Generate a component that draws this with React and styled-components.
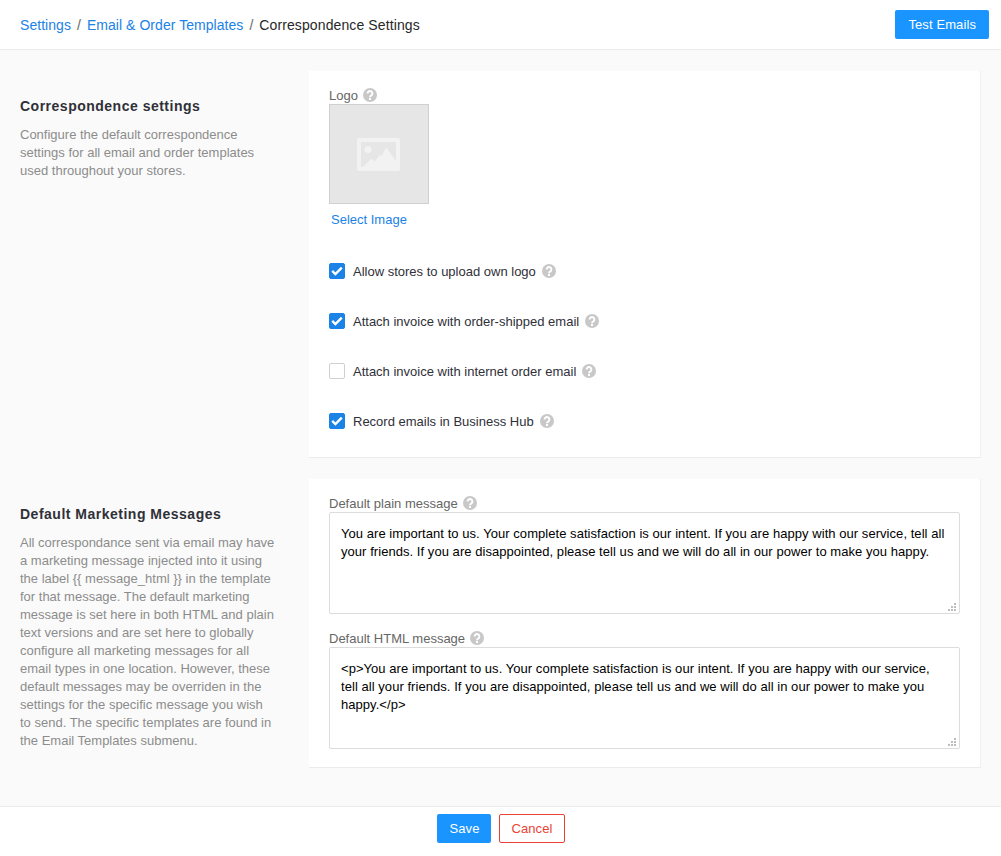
import React from 'react';
import styled, { createGlobalStyle } from 'styled-components';

const GlobalStyle = createGlobalStyle`
  html, body {
    margin: 0;
    padding: 0;
    background: #fff;
  }
  body {
    font-family: "Liberation Sans", Arial, sans-serif;
    font-size: 13px;
  }
`;

const HelpIcon = () => (
  <HelpSvg width="14" height="14" viewBox="0 0 14 14" aria-hidden="true">
    <circle cx="7" cy="7" r="7" fill="#c8c8c8" />
    <path
      d="M4.6 5.4a2.4 2.4 0 1 1 3.8 2c-.9.6-1.4 1-1.4 1.9"
      fill="none"
      stroke="#fff"
      strokeWidth="1.9"
    />
    <rect x="6" y="10" width="2" height="2" fill="#fff" />
  </HelpSvg>
);

const CheckMark = () => (
  <svg width="12" height="10" viewBox="0 0 12 10" aria-hidden="true">
    <path d="M1.2 4.8l3.2 3.2 6.4-6.4" fill="none" stroke="#fff" strokeWidth="2.4" />
  </svg>
);

const ResizeGrip = () => (
  <GripSvg width="8" height="8" viewBox="0 0 8 8" aria-hidden="true">
    <path d="M6 0h2v2H6zM3 3h2v2H3zM6 3h2v2H6zM0 6h2v2H0zM3 6h2v2H3zM6 6h2v2H6z" fill="#bdbdbd" />
  </GripSvg>
);

const options = [
  { label: 'Allow stores to upload own logo', checked: true },
  { label: 'Attach invoice with order-shipped email', checked: true },
  { label: 'Attach invoice with internet order email', checked: false },
  { label: 'Record emails in Business Hub', checked: true },
];

const PLAIN_MESSAGE =
  'You are important to us. Your complete satisfaction is our intent. If you are happy with our service, tell all your friends. If you are disappointed, please tell us and we will do all in our power to make you happy.';
const HTML_MESSAGE = `<p>${PLAIN_MESSAGE}</p>`;
const MARKETING_INTRO =
  'All correspondance sent via email may have a marketing message injected into it using the label {{ message_html }} in the template for that message. The default marketing message is set here in both HTML and plain text versions and are set here to globally configure all marketing messages for all email types in one location. However, these default messages may be overriden in the settings for the specific message you wish to send. The specific templates are found in the Email Templates submenu.';

export default function App() {
  return (
    <Page>
      <GlobalStyle />
      <Header>
        <Breadcrumbs>
          <Crumb href="#">Settings</Crumb>
          <Separator>/</Separator>
          <Crumb href="#">Email &amp; Order Templates</Crumb>
          <Separator>/</Separator>
          <CurrentCrumb>Correspondence Settings</CurrentCrumb>
        </Breadcrumbs>
        <PrimaryButton type="button">Test Emails</PrimaryButton>
      </Header>

      <Content>
        <Section>
          <Intro>
            <IntroTitle>Correspondence settings</IntroTitle>
            <IntroText>
              Configure the default correspondence settings for all email and order templates used
              throughout your stores.
            </IntroText>
          </Intro>
          <Card $height={387}>
            <FieldLabel>
              Logo <HelpIcon />
            </FieldLabel>
            <LogoBox>
              <LogoIcon width="43" height="33" viewBox="0 0 43 33" aria-hidden="true">
                <path
                  fillRule="evenodd"
                  d="M2 0h39a2 2 0 0 1 2 2v29a2 2 0 0 1-2 2H2a2 2 0 0 1-2-2V2a2 2 0 0 1 2-2zm2 4v25h35V4H4z"
                  fill="#f2f2f2"
                />
                <circle cx="11" cy="11.5" r="3.5" fill="#f2f2f2" />
                <path d="M6 29l8-8 4 2 5-6 2 1 4-9 10 14v6z" fill="#f2f2f2" />
              </LogoIcon>
            </LogoBox>
            <SelectImage href="#">Select Image</SelectImage>
            <Options>
              {options.map((option) => (
                <OptionRow key={option.label}>
                  <CheckBox $checked={option.checked}>{option.checked && <CheckMark />}</CheckBox>
                  <OptionLabel>{option.label}</OptionLabel>
                  <HelpIcon />
                </OptionRow>
              ))}
            </Options>
          </Card>
        </Section>

        <Section>
          <Intro>
            <IntroTitle>Default Marketing Messages</IntroTitle>
            <IntroText>{MARKETING_INTRO}</IntroText>
          </Intro>
          <Card $height={289}>
            <FieldLabel>
              Default plain message <HelpIcon />
            </FieldLabel>
            <MessageWrap>
              <MessageBox readOnly value={PLAIN_MESSAGE} />
              <ResizeGrip />
            </MessageWrap>
            <FieldLabel $spaced>
              Default HTML message <HelpIcon />
            </FieldLabel>
            <MessageWrap>
              <MessageBox readOnly value={HTML_MESSAGE} />
              <ResizeGrip />
            </MessageWrap>
          </Card>
        </Section>
      </Content>

      <Footer>
        <PrimaryButton type="button" $small>
          Save
        </PrimaryButton>
        <CancelButton type="button">Cancel</CancelButton>
      </Footer>
    </Page>
  );
}

const Page = styled.div`
  display: flex;
  flex-direction: column;
  height: 856px;
  overflow: hidden;
  background: #fff;
`;

const Header = styled.header`
  display: flex;
  flex: none;
  align-items: center;
  justify-content: space-between;
  box-sizing: border-box;
  height: 50px;
  padding: 0 12px 1px 20px;
  background: #fff;
  border-bottom: 1px solid #ebebeb;
`;

const Breadcrumbs = styled.nav`
  display: flex;
  align-items: center;
  margin-top: 1px;
  font-size: 14px;
`;

const Crumb = styled.a`
  color: #1b82e6;
  letter-spacing: 0.05px;
  text-decoration: none;
`;

const CurrentCrumb = styled.span`
  color: #282828;
  letter-spacing: 0.11px;
`;

const Separator = styled.span`
  margin: 0 6px;
  color: #666;
`;

const PrimaryButton = styled.button`
  box-sizing: border-box;
  height: 29px;
  padding: 0 ${(p) => (p.$small ? '12px' : '13px')};
  border: 0;
  border-radius: 2px;
  background: #1a94ff;
  color: #fff;
  font: inherit;
  letter-spacing: 0.1px;
`;

const CancelButton = styled.button`
  box-sizing: border-box;
  height: 29px;
  padding: 0 11px;
  border: 1px solid #ea4335;
  border-radius: 2px;
  background: #fff;
  color: #ea4335;
  font: inherit;
  letter-spacing: 0.1px;
`;

const Content = styled.main`
  display: flex;
  flex: 1;
  flex-direction: column;
  gap: 21px;
  padding: 21px 20px 0;
  background: #fafafa;
`;

const Section = styled.section`
  display: grid;
  grid-template-columns: 289px 672px;
`;

const Intro = styled.div`
  padding: 27px 34px 0 0;
`;

const IntroTitle = styled.h2`
  margin: 0 0 11px;
  color: #303038;
  font-size: 14px;
  font-weight: 700;
  line-height: 17px;
  letter-spacing: 0.5px;
`;

const IntroText = styled.p`
  margin: 0;
  color: #8c8c8c;
  font-size: 13px;
  line-height: 18px;
`;

const Card = styled.div`
  box-sizing: border-box;
  height: ${(p) => p.$height}px;
  padding: 15px 20px 0;
  background: #fff;
  border-right: 1px solid #f0f0f0;
  border-bottom: 1px solid #ebebeb;
`;

const FieldLabel = styled.div`
  display: flex;
  align-items: center;
  gap: 5px;
  height: 18px;
  margin-top: ${(p) => (p.$spaced ? '15px' : '0')};
  color: #666;
  font-size: 13px;
`;

const HelpSvg = styled.svg`
  flex: none;
  display: block;
`;

const LogoBox = styled.div`
  display: flex;
  align-items: center;
  justify-content: center;
  box-sizing: border-box;
  width: 100px;
  height: 100px;
  background: #e6e6e6;
  border: 1px solid #d0d0d0;
`;

const LogoIcon = styled.svg`
  margin: 1px 1px 0 0;
`;

const SelectImage = styled.a`
  display: block;
  margin: 8px 0 0 2px;
  color: #1b82e6;
  font-size: 13px;
  line-height: 15px;
  text-decoration: none;
`;

const Options = styled.div`
  display: flex;
  flex-direction: column;
  gap: 32px;
  margin-top: 35px;
`;

const OptionRow = styled.label`
  display: flex;
  align-items: center;
  height: 18px;
`;

const CheckBox = styled.span`
  display: flex;
  flex: none;
  align-items: center;
  justify-content: center;
  box-sizing: border-box;
  width: 16px;
  height: 16px;
  margin-right: 8px;
  border: 1px solid ${(p) => (p.$checked ? '#1b82e6' : '#d0d0d0')};
  border-radius: 2px;
  background: ${(p) => (p.$checked ? '#1b82e6' : '#fff')};
`;

const OptionLabel = styled.span`
  margin-right: 6px;
  color: #303038;
  font-size: 13px;
`;

const MessageWrap = styled.div`
  position: relative;
  width: 631px;
  height: 102px;
`;

const MessageBox = styled.textarea`
  display: block;
  box-sizing: border-box;
  width: 100%;
  height: 100%;
  padding: 12px 11px 10px;
  border: 1px solid #dcdcdc;
  border-radius: 2px;
  background: #fff;
  color: #000;
  font-family: inherit;
  font-size: 13px;
  line-height: 18px;
  letter-spacing: 0.05px;
  outline: none;
  resize: none;
`;

const GripSvg = styled.svg`
  position: absolute;
  right: 4px;
  bottom: 3px;
`;

const Footer = styled.footer`
  display: flex;
  flex: none;
  align-items: flex-start;
  justify-content: center;
  gap: 8px;
  box-sizing: border-box;
  height: 50px;
  padding: 7px 0 0 1px;
  background: #fff;
  border-top: 1px solid #ebebeb;
`;
